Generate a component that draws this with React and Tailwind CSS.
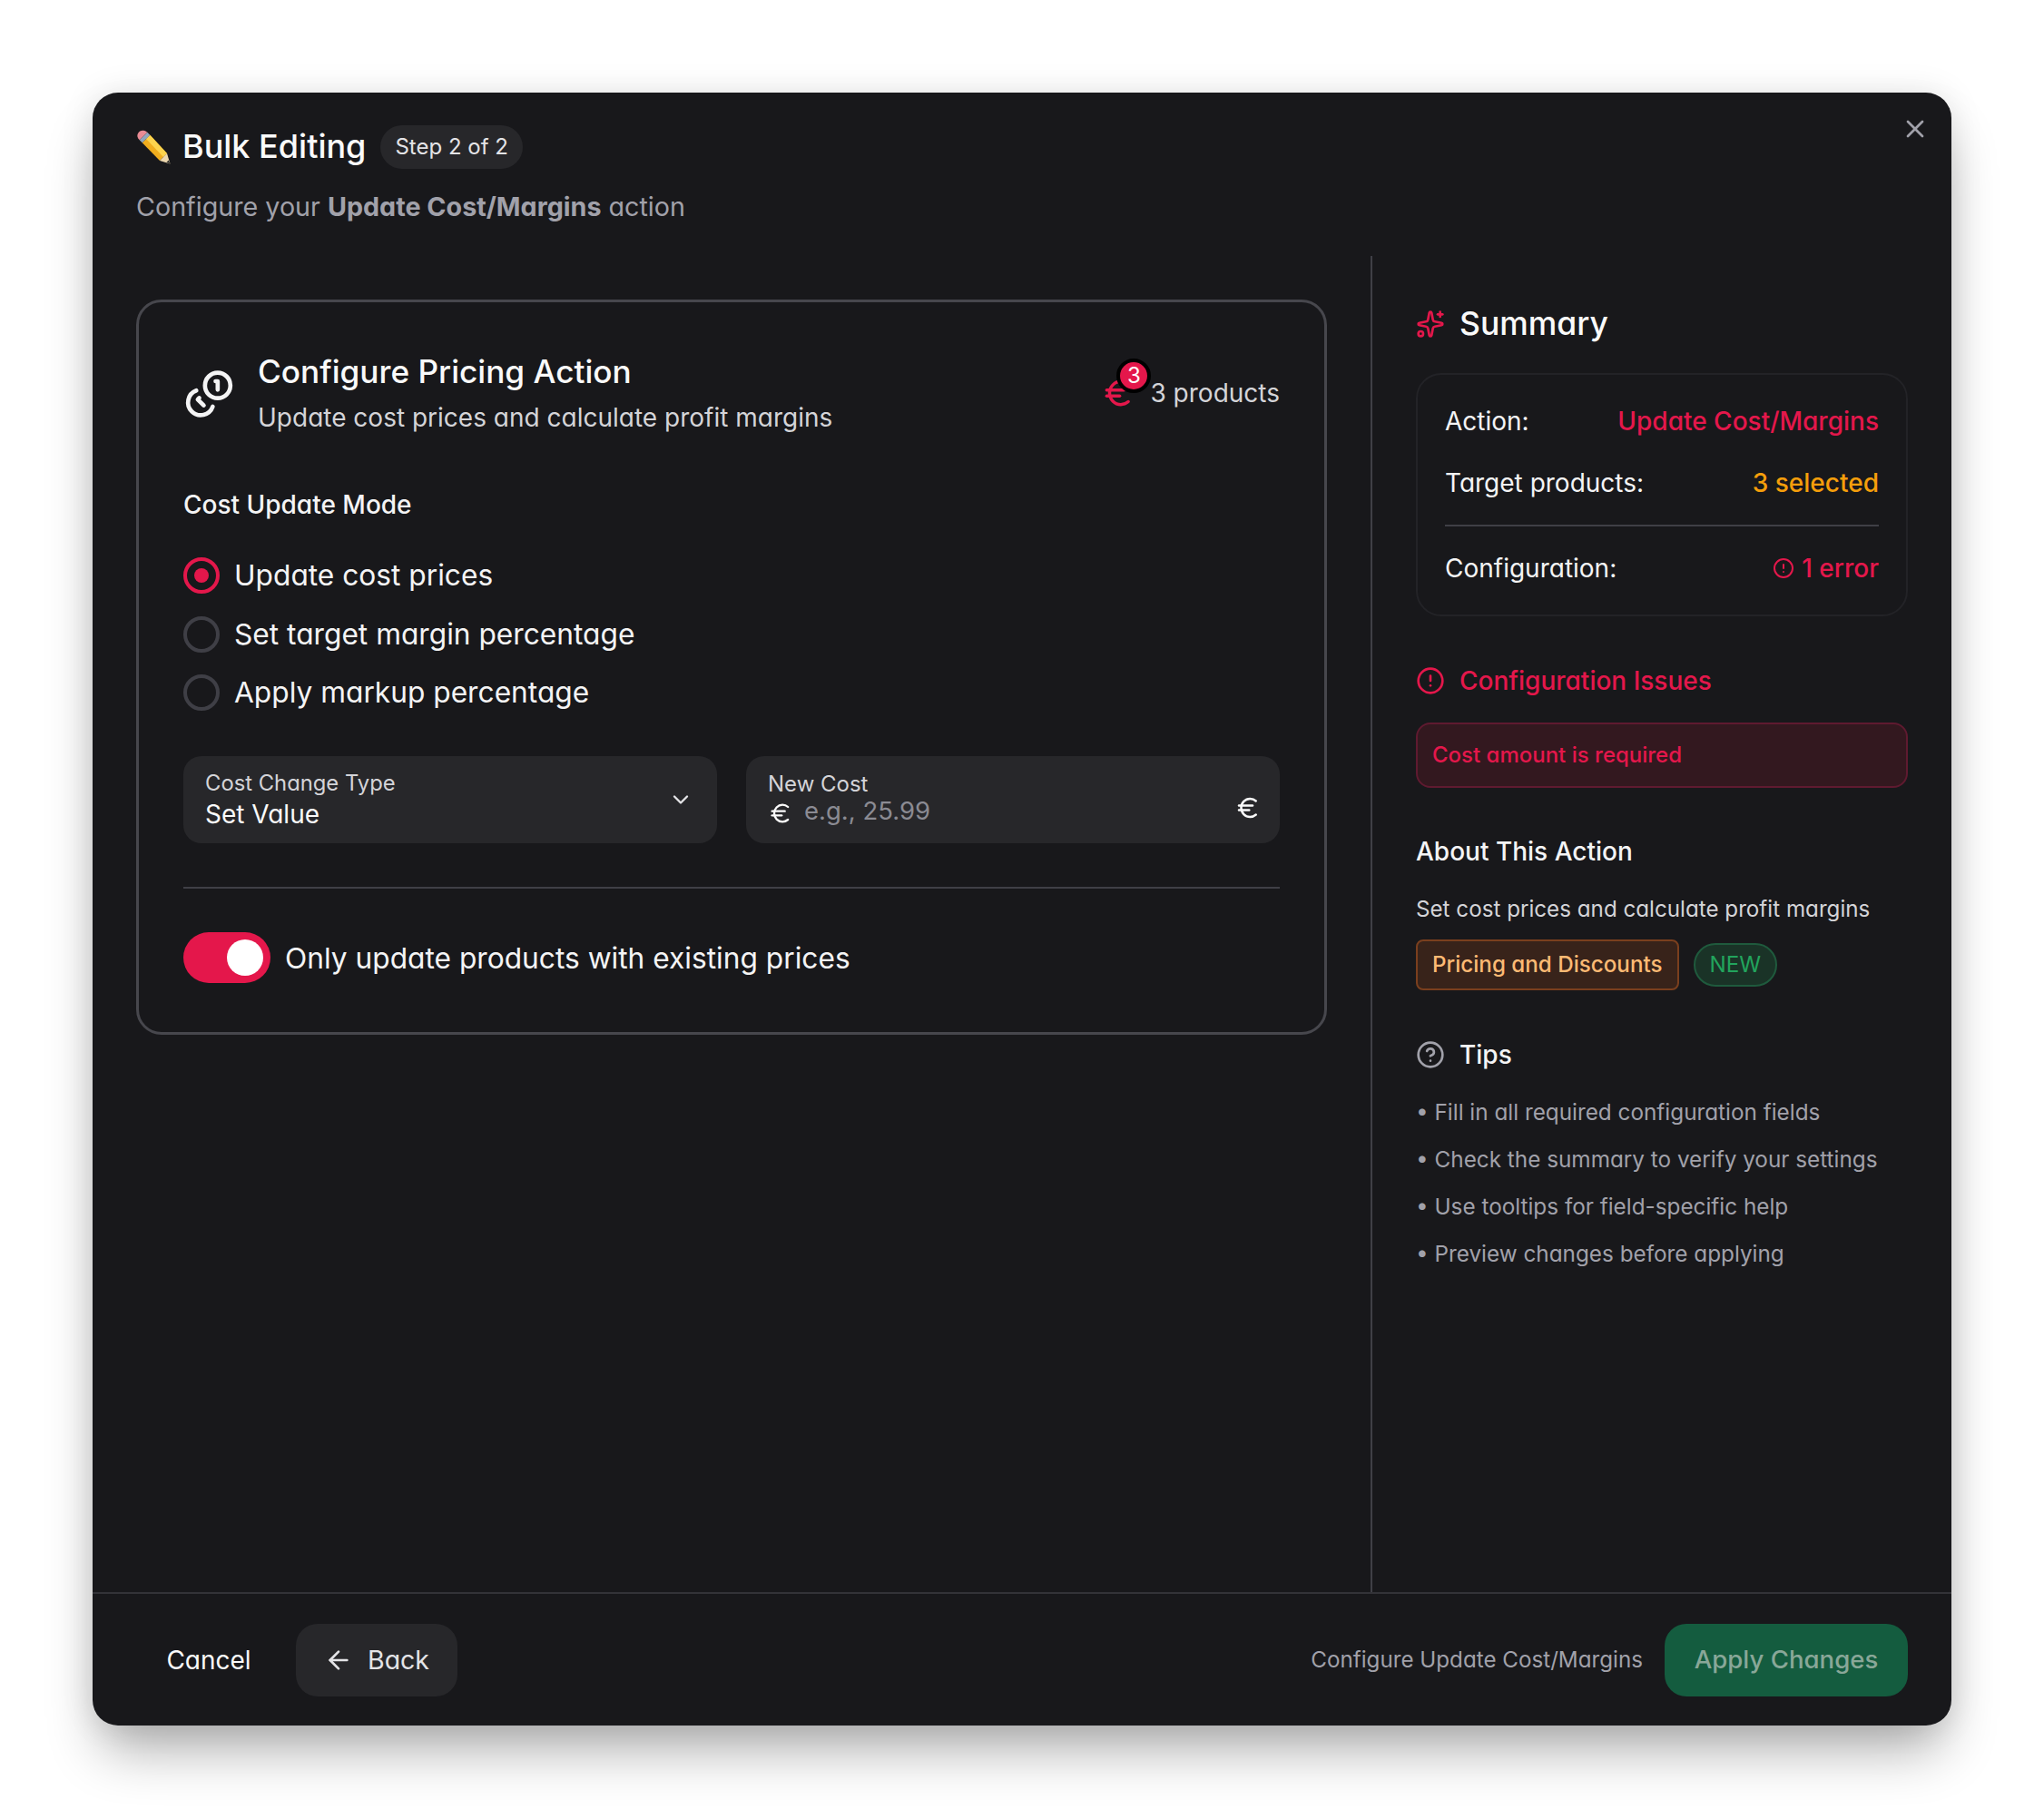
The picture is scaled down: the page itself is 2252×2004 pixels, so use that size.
import { AlertCircle, ArrowLeft, ChevronDown, CircleHelp, Euro, Sparkles, X } from "lucide-react";

const PencilIcon = () => (
  <svg width="38" height="38" viewBox="0 0 38 38" className="shrink-0">
    <path d="M15.300 5.700 L34 26 L26 34 L6.700 14.300 Z" fill="#f0ad1e" />
    <path d="M15.300 5.700 L34 26 L30 30 L11 10 Z" fill="#fcd34d" />
    <path d="M26 34 L34 26 L37.500 37.500 Z" fill="#ecd7ae" />
    <path d="M33.500 35.800 L35.800 33.500 L37.500 37.500 Z" fill="#2a2a2a" />
    <path d="M12.300 2.700 L15.300 5.700 L6.700 14.300 L3.700 11.300 Z" fill="#8fa6bd" />
    <path d="M3.700 11.300 Q0 7.500 2 4 Q4 0.500 8 0.800 Q10 1 12.300 2.700 Z" fill="#e88b94" />
  </svg>
);

// same strokes as lucide coins, redrawn with the full coin on the right
const CoinsIcon = () => (
  <svg
    width="57"
    height="56"
    viewBox="0 0 24 24"
    fill="none"
    stroke="#f4f4f5"
    strokeWidth="2"
    strokeLinecap="round"
    strokeLinejoin="round"
    className="shrink-0"
  >
    <circle cx="16" cy="8" r="6" />
    <path d="M5.910 10.370A6 6 0 1 0 13.660 18" />
    <path d="M15 6h1v4" />
    <path d="M7.290 13.880l-.7.71 2.820 2.820" />
  </svg>
);

const Radio = ({ label, checked }) => (
  <div className="flex h-[44px] items-center gap-[16px]">
    <div
      className={
        checked
          ? "flex h-[40px] w-[40px] items-center justify-center rounded-full border-[4px] border-[#e4174b]"
          : "flex h-[40px] w-[40px] items-center justify-center rounded-full border-[4px] border-[#3f3f46]"
      }
    >
      {checked && <div className="h-[16px] w-[16px] rounded-full bg-[#e4174b]" />}
    </div>
    <span className="text-[31.7px] leading-[44px] text-[#f4f4f5]">{label}</span>
  </div>
);

const SummaryRow = ({ label, children, className }) => (
  <div className={className}>
    <span className="text-[#f4f4f5]">{label}</span>
    {children}
  </div>
);

const tips = [
  "Fill in all required configuration fields",
  "Check the summary to verify your settings",
  "Use tooltips for field-specific help",
  "Preview changes before applying",
];

export default function App() {
  return (
    <div className="h-[2004px] w-full bg-white pl-[102px] pt-[102px] font-[Inter,sans-serif] [font-feature-settings:'cv11']">
      <div className="relative flex h-[1799px] w-[2048px] flex-col rounded-[28px] bg-[#18181b] shadow-[0_36px_60px_-10px_rgba(0,0,0,0.32),0_0_36px_rgba(0,0,0,0.1)]">
        <button className="absolute right-[24px] top-[24px] text-[#a1a1aa]">
          <X size={32} strokeWidth={2} />
        </button>

        {/* header */}
        <div className="px-[48px] pb-[34px] pt-[36px]">
          <div className="flex h-[48px] items-center">
            <PencilIcon />
            <h1 className="ml-[13px] -translate-y-[1px] text-[36px] font-medium leading-[48px] text-[#fafafa]">Bulk Editing</h1>
            <span className="ml-[16px] flex h-[48px] items-center rounded-full bg-[#27272a] px-[16px] text-[24px] text-[#e4e4e7]">
              Step 2 of 2
            </span>
          </div>
          <p className="mt-[22px] text-[28.7px] leading-[40px] text-[#a1a1aa]">
            Configure your <span className="font-bold">Update Cost/Margins</span> action
          </p>
        </div>

        <div className="flex min-h-0 flex-1">
          {/* left column */}
          <div className="w-[1410px] border-r-2 border-[#3f3f46] px-[48px] pt-[48px]">
            <div className="rounded-[28px] border-[3px] border-[#47474d] px-[49px] pb-[54px] pt-[54px]">
              <div className="flex items-center justify-between">
                <div className="flex items-center gap-[25px]">
                  <CoinsIcon />
                  <div>
                    <h2 className="text-[35.2px] font-medium leading-[44px] text-[#fafafa]">Configure Pricing Action</h2>
                    <p className="mt-[9px] text-[28px] leading-[40px] text-[#d4d4d8]">
                      Update cost prices and calculate profit margins
                    </p>
                  </div>
                </div>
                <div className="-mt-[2px] flex items-center gap-[16px]">
                  <div className="relative h-[38px] w-[38px]">
                    <Euro size={38} strokeWidth={2.2} className="text-[#e4174b]" />
                    <span className="absolute left-[17px] top-[-19px] flex h-[38px] w-[38px] items-center justify-center rounded-full border-[4px] border-black bg-[#e4174b] text-[24px] leading-none text-white">
                      3
                    </span>
                  </div>
                  <span className="text-[28px] leading-[40px] text-[#d4d4d8]">3 products</span>
                </div>
              </div>

              <h3 className="mt-[56px] text-[28px] font-medium leading-[40px] text-[#f4f4f5]">Cost Update Mode</h3>

              <div className="mt-[36px] flex flex-col gap-[20.5px]">
                <Radio label="Update cost prices" checked />
                <Radio label="Set target margin percentage" />
                <Radio label="Apply markup percentage" />
              </div>

              <div className="mt-[48px] grid grid-cols-2 gap-[32px]">
                <div className="flex h-[96px] items-center justify-between rounded-[20px] bg-[#27272a] pl-[24px] pr-[26px]">
                  <div>
                    <div className="text-[23.8px] leading-[32px] text-[#d4d4d8]">Cost Change Type</div>
                    <div className="text-[28px] leading-[36px] text-[#fafafa]">Set Value</div>
                  </div>
                  <ChevronDown size={28} strokeWidth={2} className="text-[#e4e4e7]" />
                </div>
                <div className="flex h-[96px] items-center justify-between rounded-[20px] bg-[#27272a] pl-[24px] pr-[20px]">
                  <div>
                    <div className="translate-y-[3px] text-[24px] leading-[30px] text-[#d4d4d8]">New Cost</div>
                    <div className="flex items-center gap-[12px]">
                      <Euro size={28} strokeWidth={2} className="text-[#fafafa]" />
                      <span className="mb-[7px] text-[27.5px] leading-[34px] text-[#8b8b93]">e.g., 25.99</span>
                    </div>
                  </div>
                  <Euro size={30} strokeWidth={2} className="mt-[18px] text-[#fafafa]" />
                </div>
              </div>

              <div className="mt-[48px] h-[2px] bg-[#3f3f46]" />

              <div className="mt-[48px] flex items-center gap-[16px]">
                <div className="flex h-[56px] w-[96px] items-center justify-end rounded-full bg-[#e4174b] pr-[8px]">
                  <div className="h-[40px] w-[40px] rounded-full bg-white" />
                </div>
                <span className="mt-[2px] text-[31.7px] leading-[44px] text-[#f4f4f5]">Only update products with existing prices</span>
              </div>
            </div>
          </div>

          {/* summary column */}
          <div className="min-w-0 flex-1 px-[48px] pt-[51px]">
            <div className="flex h-[48px] items-center gap-[16px]">
              <Sparkles size={32} strokeWidth={2} className="text-[#e4174b]" />
              <h2 className="text-[35.5px] font-medium leading-[48px] text-[#fafafa]">Summary</h2>
            </div>

            <div className="mt-[30px] rounded-[28px] border-2 border-[#232327] px-[30px] pb-[31px] pt-[31px] text-[28px] leading-[40px]">
              <SummaryRow label="Action:" className="flex justify-between">
                <span className="font-medium text-[#e4174b]">Update Cost/Margins</span>
              </SummaryRow>
              <SummaryRow label="Target products:" className="mt-[28px] flex justify-between">
                <span className="font-medium text-[#f59e0b]">3 selected</span>
              </SummaryRow>
              <div className="mt-[26px] h-[2px] bg-[#3f3f46]" />
              <SummaryRow label="Configuration:" className="mt-[26px] flex justify-between">
                <span className="flex items-center gap-[8px] font-medium text-[#e4174b]">
                  <AlertCircle size={24} strokeWidth={2} />1 error
                </span>
              </SummaryRow>
            </div>

            <div className="mt-[51px] flex h-[40px] items-center gap-[16px] text-[#e4174b]">
              <AlertCircle size={32} strokeWidth={2} />
              <h3 className="text-[28px] font-medium leading-[40px]">Configuration Issues</h3>
            </div>

            <div className="mt-[26px] flex h-[72px] items-center rounded-[16px] border-2 border-[#5f1a30] bg-[#33181f] px-[16px]">
              <span className="text-[24px] font-medium text-[#e4174b]">Cost amount is required</span>
            </div>

            <h3 className="mt-[50px] text-[28px] font-medium leading-[40px] text-[#f4f4f5]">About This Action</h3>
            <p className="mt-[26px] text-[24.2px] leading-[36px] text-[#d4d4d8]">Set cost prices and calculate profit margins</p>

            <div className="mt-[15px] flex items-center gap-[16px]">
              <span className="flex h-[56px] items-center rounded-[8px] border-2 border-[#7a3f1e] bg-[#38231a] px-[16px] text-[24.2px] font-medium text-[#fdba74]">
                Pricing and Discounts
              </span>
              <span className="flex h-[48px] items-center rounded-full border-2 border-[#1f5a3d] bg-[#1a3327] px-[16px] text-[24.2px] text-[#22a45d]">
                NEW
              </span>
            </div>

            <div className="mt-[51px] flex h-[40px] items-center gap-[16px]">
              <CircleHelp size={32} strokeWidth={2} className="text-[#a1a1aa]" />
              <h3 className="text-[28px] font-medium leading-[40px] text-[#f4f4f5]">Tips</h3>
            </div>

            <ul className="mt-[25px] flex flex-col gap-[16px] text-[24.3px] leading-[36px] text-[#a1a1aa]">
              {tips.map((tip) => (
                <li key={tip}>• {tip}</li>
              ))}
            </ul>
          </div>
        </div>

        {/* footer */}
        <div className="flex items-center justify-between border-t-2 border-[#333338] px-[48px] pb-[32px] pt-[33px]">
          <div className="flex items-center gap-[16px]">
            <button className="h-[80px] w-[160px] text-[28px] text-[#fafafa]">Cancel</button>
            <button className="flex h-[80px] w-[178px] items-center justify-center gap-[16px] rounded-[24px] bg-[#27272a] text-[28.5px] text-[#e4e4e7]">
              <ArrowLeft size={32} strokeWidth={2} />
              Back
            </button>
          </div>
          <div className="flex items-center gap-[24px]">
            <span className="text-[24.2px] text-[#a1a1aa]">Configure Update Cost/Margins</span>
            <button className="flex h-[80px] w-[268px] items-center justify-center rounded-[24px] bg-[#145c3f] text-[27.6px] font-medium text-[#89a798]">
              Apply Changes
            </button>
          </div>
        </div>
      </div>
    </div>
  );
}
